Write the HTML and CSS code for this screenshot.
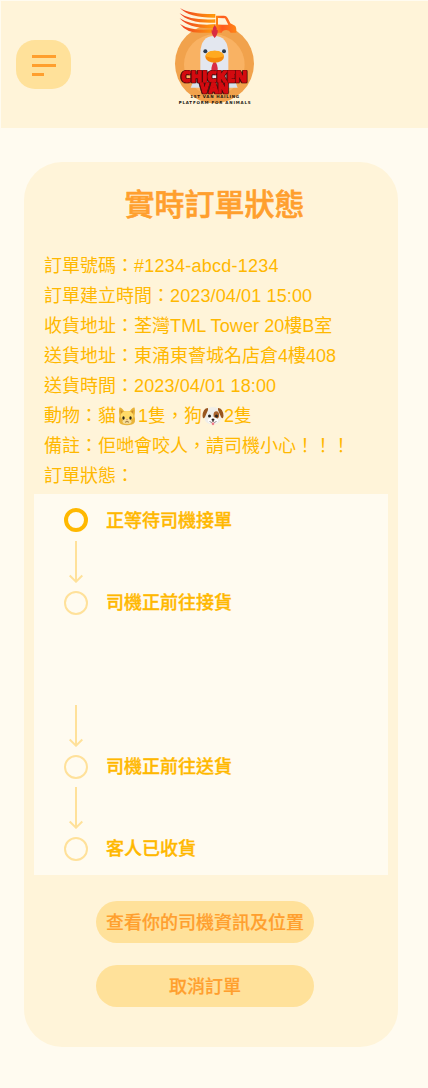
FILE: index.html
```html
<!DOCTYPE html>
<html lang="zh-Hant">
<head>
<meta charset="utf-8">
<meta name="viewport" content="width=device-width, initial-scale=1">
<title>實時訂單狀態</title>
<link rel="stylesheet" href="styles.css">
</head>
<body>
<svg class="defs" width="0" height="0" aria-hidden="true">
  <symbol id="arrow" viewBox="0 0 14 42"><path d="M7 0V40.500M.700 34.500 7 40.700 13.300 34.500" fill="none" stroke="#ffe19a" stroke-width="2"/></symbol>
</svg>
<header class="header">
  <button class="menu" aria-label="選單">
    <span class="menu-bar"></span>
    <span class="menu-bar"></span>
    <span class="menu-bar menu-bar-short"></span>
  </button>
  <svg class="logo" viewBox="0 0 300 330" role="img" aria-label="Chicken Van">
    <defs>
      <linearGradient id="flame" gradientUnits="userSpaceOnUse" x1="44" x2="214" y1="0" y2="0"><stop offset="0" stop-color="#ed3b24"/><stop offset=".6" stop-color="#ff9a0c"/><stop offset=".75" stop-color="#ff5a20"/><stop offset="1" stop-color="#ff8515"/></linearGradient>
    </defs>
    <circle cx="148.500" cy="191" r="118.500" fill="#f1a24c"/>
    <circle cx="148" cy="194" r="91" fill="#f9b263"/>
    <path d="M106 250V158Q108 108 148 108T190 158V250Z" fill="#e3e7ef"/>
    <path d="M106 210Q91 229 77 263H107ZM190 210Q205 228 218 263H189Z" fill="#d9e2ec"/>
    <g fill="url(#flame)">
      <path d="M45 24Q76 43 151 42V53Q72 54 45 24Z"/>
      <path d="M44 40Q76 62 151 58V68Q72 72 44 40Z"/>
      <path d="M44 55Q79 78 151 73V84Q75 89 44 55Z"/>
      <path d="M45 72Q81 96 151 87V98H112Q66 101 45 72Z"/>
      <path fill-rule="evenodd" d="M153 47H177Q184 47 188 54L196 70 210 77Q215 81 214 98H197Q193 90 184 90 173 90 170 98H153ZM159 54V74H190L180 55Z"/>
    </g>
    <path d="M149 75Q157 83 155 91L158 89Q160 101 149 114 138 101 140 89L143 92Q142 84 149 75Z" fill="#d92c43"/>
    <circle cx="121" cy="154" r="6" fill="#2b3b4e"/>
    <circle cx="177" cy="154" r="6" fill="#2b3b4e"/>
    <path d="M149 183Q159 193 158 212H139Q139 193 149 183Z" fill="#d92c43"/>
    <ellipse cx="149" cy="170" rx="28" ry="18" fill="#f58a0b"/>
    <path d="M121 169Q123 152 149 152T177 169Q150 179 121 169Z" fill="#ffaa20"/>
    <g class="brand">
      <text x="148" y="245" font-size="49" textLength="198" lengthAdjust="spacingAndGlyphs">CHICKEN</text>
      <text x="148" y="280" font-size="42" textLength="85" lengthAdjust="spacingAndGlyphs">VAN</text>
    </g>
    <g class="tagline">
      <text x="149" y="295" textLength="146" lengthAdjust="spacing">1ST VAN HAILING</text>
      <text x="149" y="312" textLength="216" lengthAdjust="spacing">PLATFORM FOR ANIMALS</text>
    </g>
  </svg>
</header>
<main class="card">
  <h1 class="title">實時訂單狀態</h1>
  <div class="details">
    <p>訂單號碼：<span class="code">#1234-abcd-1234</span></p>
    <p>訂單建立時間：<span class="latin">2023/04/01 15:00</span></p>
    <p>收貨地址：荃灣<span class="latin">TML Tower</span> 20樓B室</p>
    <p>送貨地址：東涌東薈城名店倉4樓408</p>
    <p>送貨時間：<span class="latin">2023/04/01 18:00</span></p>
    <p>動物：貓<svg class="emoji" viewBox="0 0 22 20" role="img" aria-label="貓">
      <path d="M3.500 1.500Q5.500 1 8 5H14Q16.500 1 18.500 1.500 19.500 4 18.500 10 20.500 17 16 18.500 11 20 6 18.500 1.500 17 3.500 10 2.500 4 3.500 1.500Z" fill="#e9b43a"/>
      <path d="M4.500 4 5 8 7.500 6ZM17.500 4 17 8 14.500 6Z" fill="#c98d2c"/>
      <ellipse cx="11" cy="10" rx="6.500" ry="5" fill="#ffda68"/>
      <ellipse cx="11" cy="15.500" rx="4.500" ry="2.500" fill="#f6df9c"/>
      <ellipse cx="7.500" cy="12" rx="1.200" ry="1.700" fill="#28251a"/><ellipse cx="14.500" cy="12" rx="1.200" ry="1.700" fill="#28251a"/>
      <path d="M10 13.500H12L11 14.500Z" fill="#b85b49"/><path d="M9 16Q10.500 16.700 11 15 11.500 16.700 13 16" fill="none" stroke="#805625" stroke-width=".7"/>
    </svg>1隻，狗<svg class="emoji" viewBox="0 0 22 20" role="img" aria-label="狗">
      <path d="M5 3Q11-1 17 3L19 12Q18 18 11 18.500 3 18 2.500 12Z" fill="#f0eee9"/>
      <path d="M6 2Q1 2 .5 10 1 14 3 11L6 4ZM16 2Q21 2 21.500 10 21 14 19 11L16 4Z" fill="#99561f"/>
      <ellipse cx="14.300" cy="9" rx="2.800" ry="3.800" fill="#a8622d"/>
      <circle cx="7.500" cy="10" r="1.500" fill="#28231f"/><circle cx="14.500" cy="10" r="1.500" fill="#28231f"/>
      <ellipse cx="11" cy="14.500" rx="5" ry="3.300" fill="#fff"/>
      <path d="M9.500 13Q11 12.200 12.500 13 12.500 15 11 15 9.500 15 9.500 13Z" fill="#2c211e"/>
      <path d="M9.700 16.500H12.300V18Q11 20.500 9.700 18Z" fill="#f17986"/>
      <path d="M7.500 15.500Q10 17.500 11 15 12 17.500 14.500 15.500" fill="none" stroke="#625952" stroke-width=".7"/>
    </svg>2隻</p>
    <p>備註：佢哋會咬人，請司機小心！！！</p>
    <p>訂單狀態：</p>
  </div>
  <ol class="steps">
    <li class="step step-active">
      <span class="dot"></span><span class="label">正等待司機接單</span>
      <svg class="arrow"><use href="#arrow"/></svg>
    </li>
    <li class="step step-pickup">
      <span class="dot"></span><span class="label">司機正前往接貨</span>
      <svg class="arrow"><use href="#arrow"/></svg>
    </li>
    <li class="step step-delivery">
      <span class="dot"></span><span class="label">司機正前往送貨</span>
      <svg class="arrow"><use href="#arrow"/></svg>
    </li>
    <li class="step">
      <span class="dot"></span><span class="label">客人已收貨</span>
    </li>
  </ol>
  <div class="actions">
    <button class="action">查看你的司機資訊及位置</button>
    <button class="action">取消訂單</button>
  </div>
</main>
</body>
</html>
```

FILE: styles.css
```css
* {
  box-sizing: border-box;
}

body {
  margin: 0;
  padding: 1px 0 41px 1px;
  background: #fffbf0;
  font-family: "Liberation Sans", "Noto Sans CJK TC", sans-serif;
  color: #ffb800;
}

.defs {
  display: block;
}

.header {
  display: grid;
  grid-template-columns: 55px 100px;
  column-gap: 94px;
  align-items: start;
  height: 127px;
  padding-left: 15px;
  background: #fff4d9;
}

.menu {
  display: flex;
  flex-direction: column;
  align-items: flex-start;
  gap: 6px;
  width: 55px;
  height: 49px;
  margin: 39px 0 0;
  padding: 15px 0 0 16px;
  border: 0;
  border-radius: 19px;
  background: #ffe19a;
}

.menu-bar {
  width: 24px;
  height: 3px;
  background: #ff9f2e;
}

.menu-bar-short {
  width: 12px;
}

.logo {
  display: block;
  width: 100px;
  height: 110px;
  margin-top: -1px;
}

.brand {
  fill: #d40b10;
  stroke: #d40b10;
  stroke-width: 4px;
  stroke-linejoin: round;
  font-family: "Open Sans", "Liberation Sans", sans-serif;
  font-weight: 800;
  text-anchor: middle;
  filter: drop-shadow(1.5px 0 #3a0909) drop-shadow(-1.5px 0 #3a0909) drop-shadow(0 1.5px #3a0909);
}

.tagline {
  fill: #17130f;
  font-family: "DejaVu Sans", sans-serif;
  font-size: 12px;
  font-weight: 700;
  text-anchor: middle;
}

.card {
  width: 374px;
  height: 885px;
  margin: 34px 0 0 23px;
  padding: 18px 10px 40px;
  border-radius: 38px;
  background: #fff4d9;
}

.title {
  margin: 0;
  padding-left: 7px;
  color: #ff9f2e;
  font-size: 30px;
  font-weight: 500;
  line-height: 44px;
  text-align: center;
  -webkit-text-stroke: 0.6px currentColor;
}

.title,
.label,
.action {
  font-family: "Noto Sans CJK TC", sans-serif;
}

.details {
  padding: 27px 0 3px 10px;
  font-size: 18px;
}

.details p {
  height: 30px;
  margin: 0;
  line-height: 30px;
  white-space: nowrap;
}

.code {
  letter-spacing: 0.25px;
}

.latin {
  letter-spacing: 0.13px;
}

.emoji {
  width: 22px;
  height: 20px;
  vertical-align: -4px;
}

.steps {
  height: 381px;
  margin: 0;
  padding: 14px 30px 0;
  background: #fffbf0;
  list-style: none;
}

.step {
  display: grid;
  grid-template: 24px 42px / 24px 1fr;
  column-gap: 18px;
  row-gap: 9px;
  align-items: center;
  align-content: start;
  height: 82px;
}

.step-active {
  height: 83px;
}

.step-pickup {
  row-gap: 90px;
  height: 164px;
}

.step-delivery {
  row-gap: 8px;
}

.dot {
  width: 24px;
  height: 24px;
  border: 2px solid #ffe19a;
  border-radius: 50%;
}

.step-active .dot {
  border: 4px solid #ffb800;
}

.label {
  height: 24px;
  font-size: 18px;
  font-weight: 500;
  line-height: 20px;
  -webkit-text-stroke: 0.35px currentColor;
}

.step-active .label {
  line-height: 22px;
}

.arrow {
  display: block;
  width: 14px;
  height: 42px;
  justify-self: center;
}

.actions {
  display: flex;
  flex-direction: column;
  gap: 22px;
  width: 218px;
  margin: 26px 0 0 62px;
}

.action {
  height: 42px;
  padding: 0 0 2px;
  border: 0;
  border-radius: 21px;
  background: #ffe19a;
  color: #ff9f2e;
  font-size: 18px;
  font-weight: 500;
  line-height: 40px;
  white-space: nowrap;
  -webkit-text-stroke: 0.2px currentColor;
}
```
